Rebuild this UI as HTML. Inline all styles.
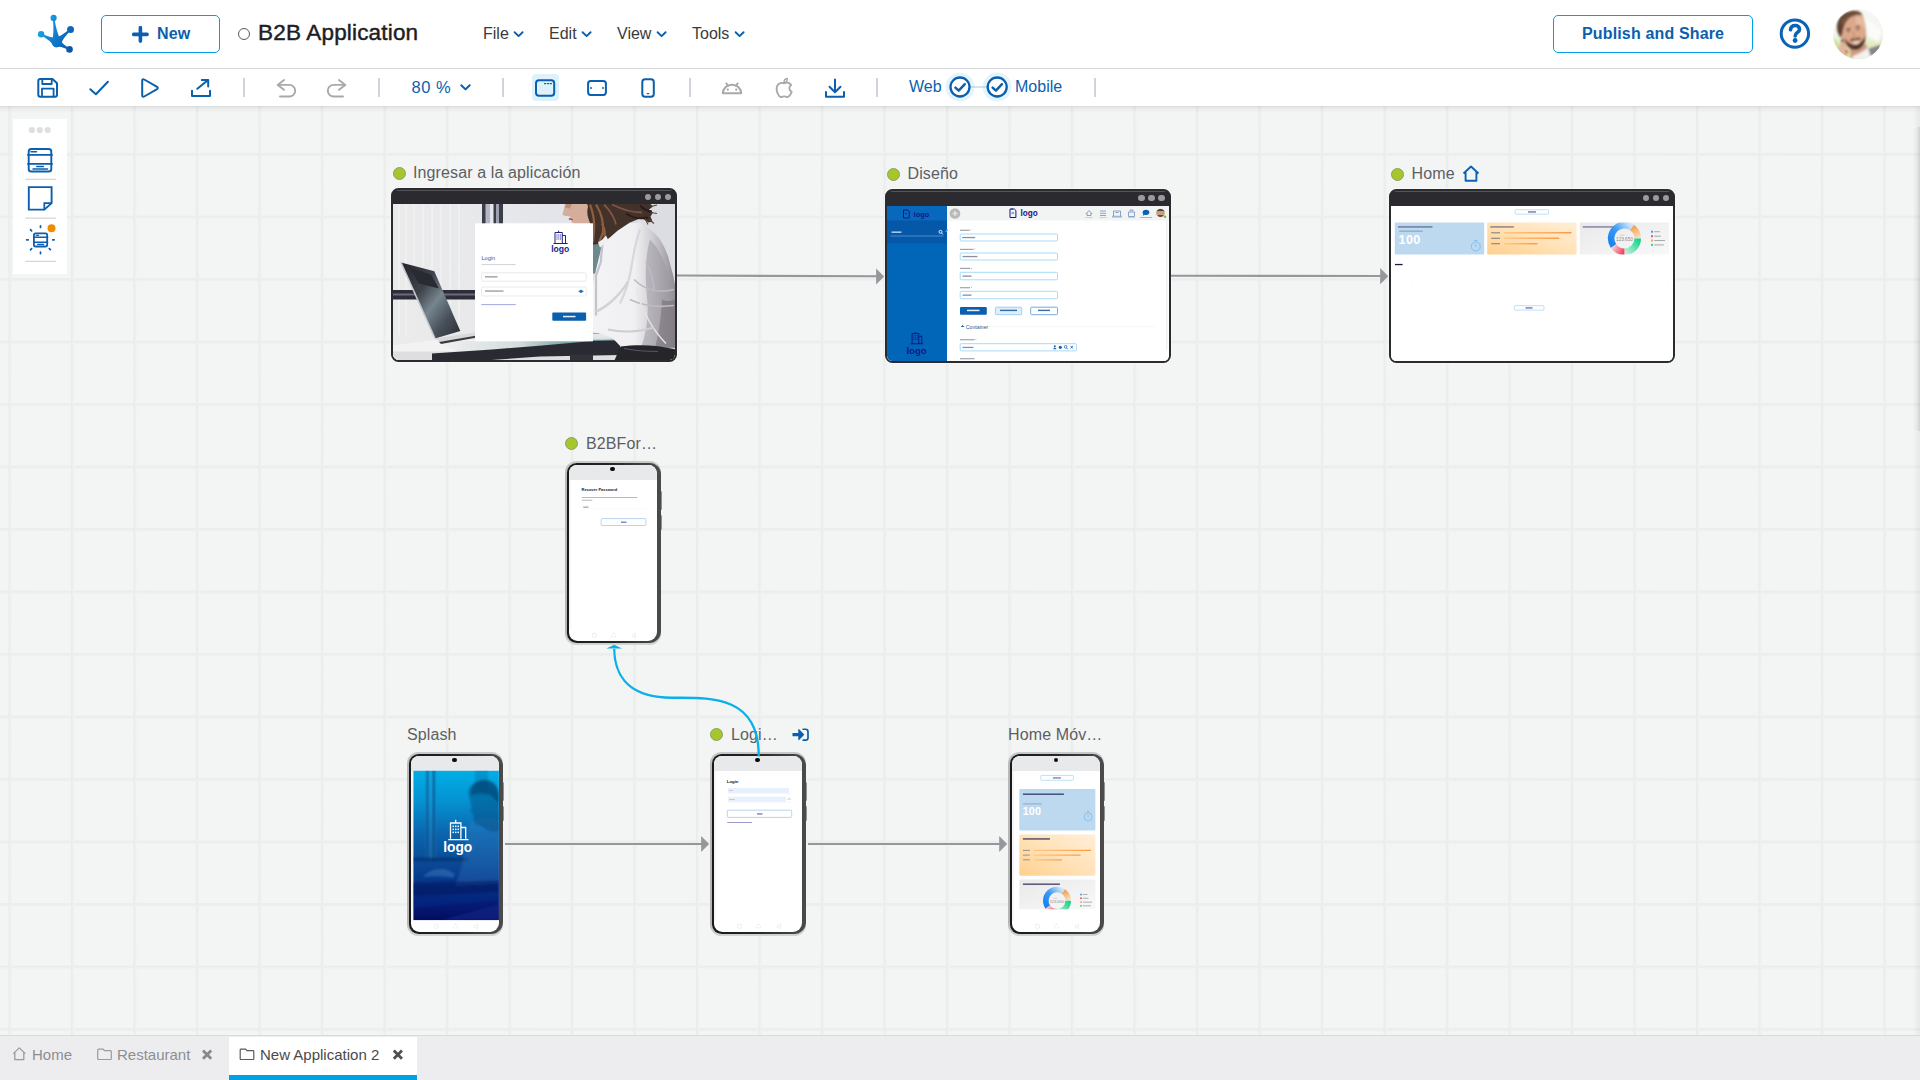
<!DOCTYPE html>
<html lang="en">
<head>
<meta charset="utf-8">
<title>B2B Application</title>
<style>
*{box-sizing:border-box;margin:0;padding:0}
html,body{width:1920px;height:1080px;overflow:hidden;background:#fff;font-family:"Liberation Sans",sans-serif;color:#333}
.abs{position:absolute}
#hdr{position:absolute;left:0;top:0;width:1920px;height:69px;background:#fff;border-bottom:1px solid #d6d8db}
#tb{position:absolute;left:0;top:69px;width:1920px;height:37px;background:#fff;z-index:5;box-shadow:0 1px 2px rgba(0,0,0,.06)}
#cv{position:absolute;left:0;top:106px;width:1920px;height:929px;background-color:#f3f5f4;overflow:hidden;
 background-image:linear-gradient(to right,#e9ebeb 0,#ebeded 1px,#eff1f0 2.600px,transparent 2.600px),linear-gradient(to bottom,#e9ebeb 0,#ebeded 1px,#eff1f0 2.600px,transparent 2.600px);
 background-size:62.5px 62.5px;background-position:8.4px 47.2px}
#cv:before{content:"";position:absolute;left:0;top:0;width:100%;height:7px;background:linear-gradient(to bottom,rgba(0,0,0,.055),rgba(0,0,0,0));z-index:1}
#cv:after{content:"";position:absolute;right:0;top:0;width:7px;height:100%;background:linear-gradient(to left,rgba(0,0,0,.05),rgba(0,0,0,0));z-index:1}
#thumb{position:absolute;left:1912.500px;top:127px;width:7.500px;height:304px;border-radius:5px 0 0 5px;background:linear-gradient(to right,rgba(0,0,0,0),rgba(0,0,0,.03) 60%,rgba(0,0,0,.10));z-index:2}
#ft{position:absolute;left:0;top:1035px;width:1920px;height:45px;background:#ededef;border-top:1px solid #d9dadc}
.btn{position:absolute;border:1px solid #00a0e4;border-radius:5px;background:#fff;color:#0a5fae;font-weight:bold;font-size:16px;text-align:center}
.menu{position:absolute;top:25px;font-size:16px;color:#3a3a3a;white-space:nowrap}
.lbl{position:absolute;font-size:16px;color:#5d5e63;white-space:nowrap;letter-spacing:.12px;margin-top:1.200px}
.dot{position:absolute;width:13.200px;height:13.200px;border-radius:50%;background:#a5c72c;border:1px solid #8f9f62}
.sep{position:absolute;top:78px;width:2px;height:19px;background:#d2d3da}
.web{position:absolute;width:286px;height:174px;border:2px solid #2b2a2f;border-radius:7.500px;background:#2b2a2f;overflow:hidden;box-shadow:0 0 0 1px rgba(255,255,255,.3)}
.web .wc{background:#fff;border-radius:0 0 5.500px 5.500px}
.web .bar{position:absolute;left:0;top:0;width:100%;height:14.400px;background:#2b2a2f}
.web .bar:before{content:"";position:absolute;left:3px;right:3px;top:0;height:1px;background:rgba(255,255,255,.2)}
.web .bar i{position:absolute;top:3.600px;width:6.600px;height:6.600px;margin-left:-.3px;border-radius:50%;background:#9b9b9f}
.ph{position:absolute;width:96px;height:183px;border-radius:14px;background:#fff;border:2.5px solid #2e2e30;box-shadow:0 0 0 1px #b9b9bb;overflow:hidden}

.pho{position:absolute;width:95.600px;height:184.100px;border-radius:11.500px;background:linear-gradient(to bottom,#c9c9ca 0,#b9b9ba 8%,#b4b4b5 92%,#d4d4d5 100%)}
.pho .bz{position:absolute;left:2px;top:2px;right:0;bottom:2.200px;border-radius:9.800px 11.500px 12px 9.800px;background:linear-gradient(to right,#1a1a1b 0,#242425 45%,#3e3e3f 80%,#4b4b4c 100%)}
.pho .sc{position:absolute;left:3.900px;top:3.900px;right:3.500px;bottom:4.200px;border-radius:8px 8.500px 9px 8.500px;background:#fff;overflow:hidden}
.pho .st{position:absolute;left:0;top:0;width:100%;height:14.800px;background:#e8e9eb}
.pho .gut{position:absolute;left:0;top:14.800px;width:2.100px;height:150px;background:#f6f6f7}
.pho .cam{position:absolute;left:45.300px;top:5.500px;width:4.800px;height:4.800px;border-radius:50%;background:#0c0c0e}
.pho .sb{position:absolute;right:-1.300px;width:2.600px;background:#8f9190;border-radius:1.200px}
.pho svg.nav{position:absolute;left:0;top:164px}
.pho svg.in{position:absolute;left:0;top:0}
</style>
</head>
<body>
<div id="hdr">
<svg class="abs" style="left:34px;top:12px" width="46" height="44" viewBox="34 12 46 44">
<defs><linearGradient id="lg1" gradientUnits="userSpaceOnUse" x1="38" y1="30" x2="74" y2="48"><stop offset="0" stop-color="#1aa6e8"/><stop offset=".5" stop-color="#0f78c8"/><stop offset="1" stop-color="#0a52a4"/></linearGradient></defs>
<g fill="url(#lg1)" stroke="none"><circle cx="53.6" cy="17.9" r="3.1"/><circle cx="70.5" cy="29.5" r="3.5"/><circle cx="41.1" cy="34.3" r="3.2"/><circle cx="69.5" cy="49.4" r="3.3"/><path d="M61.17 41.74Q56.48 31.91 54.67 19.64L52.98 19.85Q54.20 32.19 52.03 42.86Z"/><path d="M59.72 45.68Q63.22 37.77 69.53 31.55L68.38 30.30Q61.66 36.08 53.48 38.92Z"/><path d="M58.71 38.21Q50.62 37.92 43.20 34.43L42.42 35.94Q49.56 39.96 54.49 46.39Z"/><path d="M54.38 46.33Q61.46 46.29 67.36 49.19L68.18 47.70Q62.57 44.27 58.82 38.27Z"/><ellipse cx="56.400" cy="42.600" rx="4.600" ry="4.800"/></g></svg>
<div class="btn" style="left:101px;top:15px;width:119px;height:38px"></div>
<svg class="abs" style="left:132px;top:26px" width="17" height="17" viewBox="0 0 17 17"><path d="M8.4 1.7v13.4M1.7 8.4h13.4" stroke="#0a5fae" stroke-width="3.6" stroke-linecap="round"/></svg>
<div class="abs" id="tnew" style="left:157px;top:25px;font-size:16px;font-weight:bold;color:#0a5fae;letter-spacing:.2px">New</div>
<div class="abs" style="left:238px;top:27.500px;width:12px;height:12px;border:1.300px solid #5a5a5a;border-radius:50%"></div>
<div class="abs" id="ttl" style="left:258px;top:20.200px;font-size:22.500px;letter-spacing:.18px;color:#1d1d22;white-space:nowrap;-webkit-text-stroke:.45px #1d1d22">B2B Application</div>
<div class="menu" id="m1" style="left:483px">File</div>
<div class="menu" id="m2" style="left:549px">Edit</div>
<div class="menu" id="m3" style="left:617px">View</div>
<div class="menu" id="m4" style="left:692px">Tools</div>
<svg class="abs" style="left:0;top:0" width="800" height="68"><g fill="none" stroke="#0a5fae" stroke-width="1.9" stroke-linecap="round" stroke-linejoin="round">
<path d="M514.6 32.2l4 3.9 4-3.9"/><path d="M582.6 32.2l4 3.9 4-3.9"/><path d="M657.6 32.2l4 3.9 4-3.9"/><path d="M735.6 32.2l4 3.9 4-3.9"/></g></svg>
<div class="btn" style="left:1553px;top:15px;width:200px;height:38px"></div>
<div class="abs" id="tpub" style="left:1582px;top:25px;font-size:16px;font-weight:bold;color:#0a5fae;white-space:nowrap;letter-spacing:.15px">Publish and Share</div>
<svg class="abs" style="left:1776px;top:15px" width="38" height="38" viewBox="1776 15 38 38"><circle cx="1794.900" cy="33.600" r="13.700" fill="none" stroke="#0a63b4" stroke-width="3"/>
<path d="M1790.500 29.700c.3-2.700 2.100-4.200 4.700-4.200 2.500 0 4.300 1.500 4.300 3.700 0 1.800-1 2.700-2.400 3.600-1.400 .9-1.900 1.700-1.900 3.200" fill="none" stroke="#0a63b4" stroke-width="3.600" stroke-linecap="round" stroke-linejoin="round"/><circle cx="1795.100" cy="40.500" r="2.400" fill="#0a63b4"/></svg>
<svg class="abs" style="left:1833px;top:9px" width="50" height="50" viewBox="1833 9 50 50">
<defs><clipPath id="avc"><circle cx="1858.100" cy="34.100" r="25"/></clipPath><filter id="avb" x="-10%" y="-10%" width="120%" height="120%"><feGaussianBlur stdDeviation=".8"/></filter>
<linearGradient id="avbg" x1="0" y1="0" x2="0" y2="1"><stop offset="0" stop-color="#f7f8f7"/><stop offset=".5" stop-color="#f3f5ee"/><stop offset=".75" stop-color="#dfe9b8"/><stop offset="1" stop-color="#d3e09c"/></linearGradient></defs>
<g clip-path="url(#avc)"><rect x="1833" y="9" width="50" height="50" fill="url(#avbg)"/>
<g filter="url(#avb)">
<path d="M1833 38c4 2 6 6 6 12l-6 6z" fill="#cfe0a0"/>
<path d="M1866 20c6 2 12 6 16 12l-4 10-10-6z" fill="#fbfbfa"/>
<path d="M1868 49l12-4 6 14h-30z" fill="#85858f"/>
<path d="M1849 44h17l2 8-8 6h-9z" fill="#cf9c80"/><path d="M1853 56l7-3 8-5 4 12h-20z" fill="#f3f0f0"/>
<path d="M1839 30c-1-8 4-14 11-17 6-2 11-1 13 3l2.500 10c1 6 1 11-1 16-2 5-5 8-9 8.500-5 0-9-3-12-8-2-4-3.500-7-4.500-12.500z" fill="#dba88a"/>
<path d="M1856 16c4 0 7 2 8 6l1 8c-3-4-6-6-9-6z" fill="#e6bba0"/>
<path d="M1837.500 32c-2-8 1-16 9-19.500 7-3 14-2 16 2.500-6-.5-12 1-15 5-3 3-4 7-5 13l-2 5z" fill="#5f4230"/>
<path d="M1842 24c2-6 8-10 16-10" stroke="#8a6446" stroke-width="1.600" fill="none"/>
<path d="M1844.500 38c1 6 4 11 9.500 12 5 .5 9.500-3 11-9l.5-6c-1.500 4-4 7-7.500 9-2 1-4.500 1-6.500 0-3-1.500-5.500-3.500-7-6z" fill="#523729"/>
<path d="M1850 39.500c3-1.500 7-2 11-1.500l-1 2c-3-.5-6 0-9 1.500z" fill="#5b3d2c"/>
<path d="M1852.500 42c2.500 .8 5.500 .4 7.500-1-.8 2-2.200 3-4 3s-3-.8-3.500-2z" fill="#f6ece7"/>
<path d="M1846 29.500l4.500-1.200M1855.500 27.500l4.500-1.300" stroke="#4b3326" stroke-width="1.200"/>
<path d="M1847 31.500l3-.5M1856.500 29.800l3-.6" stroke="#3a2a22" stroke-width=".9"/>
<path d="M1853.500 31c.5 3 .5 5.500-.5 7.500l3.500 .3" stroke="#b98568" stroke-width=".9" fill="none"/>
<path d="M1840.500 40l2.600-1 3.400 12-2.600 1z" fill="#2f4a45"/>
<path d="M1838 52c0-6 2-10 5-11l5 10c-1 4-2 8-3 10h-8z" fill="#e3b59b"/>
<path d="M1845.500 50c1.300-.4 2.500 .4 2.500 1.700s-.8 2-2 2z" fill="#b5505a"/>
</g></g></svg>
</div>
<div id="tb"></div>
<div id="tbi" style="position:absolute;left:0;top:0;width:1920px;height:106px;z-index:6;pointer-events:none">
<div class="sep" style="left:243px"></div><div class="sep" style="left:378px"></div><div class="sep" style="left:502px"></div><div class="sep" style="left:689px"></div><div class="sep" style="left:876px"></div><div class="sep" style="left:1094px"></div>
<div class="abs" style="left:532px;top:74px;width:27px;height:27px;border-radius:4px;background:#def2fc"></div>
<svg class="abs" style="left:0;top:69px" width="1200" height="37" viewBox="0 69 1200 37" fill="none" stroke-linecap="round" stroke-linejoin="round">
<g stroke="#0a5fae" stroke-width="2">
<!-- save -->
<path d="M40.300 79h12.200l4.500 4.300v11.400a2 2 0 0 1-2 2h-14.700a2 2 0 0 1-2-2v-13.700a2 2 0 0 1 2-2z"/><path d="M42.300 79.300v4.700h9.400v-4.700" stroke-width="1.800"/><path d="M42 96.400v-7.800h11.600v7.800" stroke-width="1.800"/>
<!-- check -->
<path d="M90.300 89.200l5.600 5 12-12.400"/>
<!-- play -->
<path d="M142.200 80.600v14.800a1.300 1.300 0 0 0 2 1.100l12.900-7.400a1.300 1.300 0 0 0 0-2.200l-12.900-7.400a1.300 1.300 0 0 0-2 1.100z"/>
<!-- export -->
<path d="M192 90.800v5.200h18v-5.200"/><path d="M197.300 88.800l10.800-8.800M201.800 80h6.400v6.400"/>
<!-- browser -->
<rect x="536" y="80.300" width="18.200" height="15.400" rx="3"/><path d="M544.500 83.600h1.200M547.500 83.600h1.200M550.300 83.600h1.200" stroke-width="1.300"/>
<!-- tablet -->
<rect x="588.100" y="80.900" width="17.800" height="14" rx="2.600"/><path d="M591 87.400v1.200M603 87.400v1.200" stroke-width="1.500"/>
<!-- phone -->
<rect x="642.300" y="79.300" width="11.500" height="17.500" rx="2.800"/><path d="M647.300 93.600h1.400" stroke-width="1.400"/>
<!-- download -->
<path d="M826 92v4.800h18V92"/><path d="M835 79.500v12.500M829.500 86.800l5.500 5.400 5.500-5.400"/>
<!-- chevron zoom -->
<path d="M461.300 85.200l4.200 4.200 4.200-4.200"/>
</g>
<g stroke="#a9a9a9" stroke-width="1.900">
<path d="M284 80l-6.300 4.900 6.300 4.900"/><path d="M278.200 84.900h11.200a5.800 5.800 0 0 1 0 11.600h-9.400"/>
<path d="M339 80l6.300 4.900-6.300 4.900"/><path d="M344.800 84.900h-11.200a5.800 5.800 0 0 0 0 11.600h9.400"/>
<!-- android -->
<path d="M722.800 93.300h18.400c0-4.600-4-8.500-9.200-8.500s-9.200 3.900-9.200 8.500z" stroke-width="2"/><path d="M726.300 83.300l1.700 2.700M737.700 83.300l-1.700 2.700" stroke-width="1.900"/><path d="M727.700 89.600h.1M736.200 89.600h.1" stroke-width="2.300"/>
<!-- apple -->
<path d="M784.300 83.300c1.600-1 2.600-.9 3.700-.6 1.300 .3 2.400 1.100 3.200 2.300-2.600 1.700-2.500 5.300 .5 6.700-.7 2-1.700 3.700-2.800 4.700-1 .9-2.100 .9-3.200 .3-1.100-.5-2-.5-3.100 0-1.100 .6-2.100 .6-3.100-.4-2.400-2.500-3.900-7.300-2.300-10.500 1.300-2.600 4.300-3.600 7.100-2.500z" stroke-width="1.900"/><path d="M784 82.700c-.2-2.100 1.300-3.900 3.300-4.200 .3 2.100-1.200 4-3.300 4.200z" stroke-width="1.300"/>
</g>
<!-- web/mobile -->
<circle cx="960" cy="87" r="14.500" fill="#e4f4fc" stroke="none"/><circle cx="997.200" cy="87" r="14.500" fill="#e4f4fc" stroke="none"/>
<path d="M970 87h17" stroke="#9ccbe8" stroke-width="1"/>
<g stroke="#0a5fae" stroke-width="2.300"><circle cx="960" cy="87" r="9.500" fill="#fff"/><circle cx="997.200" cy="87" r="9.500" fill="#fff"/>
<path d="M955.400 87.600l3.300 3 6.100-6.400M992.600 87.600l3.300 3 6.100-6.400" stroke-width="2.400"/></g>
</svg>
<div class="abs" id="tz" style="left:411.500px;top:77.500px;font-size:16.500px;letter-spacing:.55px;color:#0a5fae;white-space:nowrap">80 %</div>
<div class="abs" id="tw" style="left:909px;top:78px;font-size:16px;color:#0a5fae;white-space:nowrap">Web</div>
<div class="abs" id="tm" style="left:1015px;top:78px;font-size:16px;color:#0a5fae;white-space:nowrap">Mobile</div>
</div>
<div id="cv"><div id="cvi" style="position:absolute;left:0;top:-106px;width:1920px;height:1080px">
<div id="thumb"></div>
<div class="abs" style="left:12.700px;top:118.600px;width:54.800px;height:155.400px;background:#fff"></div>
<svg class="abs" style="left:12px;top:118px" width="56" height="157" viewBox="12 118 56 157" fill="none">
<g fill="#dfdfdf"><circle cx="31.900" cy="130" r="3.100"/><circle cx="39.800" cy="130" r="3.100"/><circle cx="47.700" cy="130" r="3.100"/></g>
<g stroke="#d6d6d6" stroke-width="1.200"><path d="M25.300 179.400h30.500M25.300 218.200h30.500M25.300 261.400h30.500"/></g>
<g stroke="#0a5fae" stroke-width="1.900" stroke-linecap="round" stroke-linejoin="round">
<rect x="28.700" y="149" width="22.600" height="22.500" rx="2.600"/><path d="M28 154.900h24M28 163.900h24"/><path d="M31 151.700h5.500M36.800 166.500h6.600M33 169h14.500" stroke-width="1.500"/>
<path d="M28.800 187.100h22.800v16l-7.300 6.500h-15.500z" stroke-linejoin="miter"/><path d="M44.300 209.400v-6.200h7" stroke-linejoin="miter" stroke-width="1.700"/>
<rect x="33.900" y="233.300" width="13.300" height="13.200" rx="1.800" stroke-width="1.800"/><path d="M33.600 237.300h14M33.600 242.300h14" stroke-width="1.500"/><path d="M36.200 235.300h2.400M37.600 244.400h6" stroke-width="1.200"/>
<path d="M40.500 225.800v1.600M40.500 252v1.600M26.700 239.800h1.500M52.700 239.800h1.500M30.500 229.700l1.100 1.100M49.300 248.600l1.100 1.100M30.500 249.800l1.100-1.100" stroke-width="1.700"/>
</g>
<circle cx="51.500" cy="228.200" r="4" fill="#ee8b00"/>
</svg>
<svg class="abs" style="left:0;top:106px;z-index:3" width="1920" height="929" viewBox="0 106 1920 929" fill="none">
<g stroke="#97969b" stroke-width="2.100"><path d="M677 275.500L877 276.300"/><path d="M1171 275.700L1381 276"/><path d="M505 844H702"/><path d="M808 844H1000"/></g>
<g fill="#97969b"><path d="M876.100 268.400l8 8-8 8z"/><path d="M1380.200 268.100l8.100 8.100-8.100 8.100z"/><path d="M701.100 836.100l8 8-8 8z"/><path d="M999.200 836.100l8 8-8 8z"/></g>
<path d="M758.700 756.500L758.700 752.500C757 690 700 699 665 697.500C625 695 614.500 672 614.200 649" stroke="#0ab0ea" stroke-width="2.300"/>
<path d="M606.300 648.600l7.900-3.800 7.900 3.800z" fill="#0ab0ea"/>
</svg>
<div class="dot" style="left:392.500px;top:166.500px"></div><div class="lbl" style="left:413px;top:163px">Ingresar a la aplicación</div>
<div class="dot" style="left:886.500px;top:167.700px"></div><div class="lbl" style="left:907.500px;top:164px">Diseño</div>
<div class="dot" style="left:1390.500px;top:167.700px"></div><div class="lbl" style="left:1411.500px;top:164px">Home</div>
<svg class="abs" style="left:1462px;top:165.300px" width="18" height="17.600" viewBox="0 0 18 17" preserveAspectRatio="none" fill="none" stroke="#0a62b4" stroke-width="1.900" stroke-linejoin="round"><path d="M1.500 8.300L9 1.500l7.500 6.800M3.600 6.700v8.600h10.800V6.700"/></svg>
<div class="dot" style="left:564.800px;top:437.300px"></div><div class="lbl" style="left:586px;top:434px">B2BFor…</div>
<div class="lbl" style="left:407px;top:725px">Splash</div>
<div class="dot" style="left:709.500px;top:728.200px"></div><div class="lbl" style="left:731px;top:725px">Logi…</div>
<svg class="abs" style="left:791.500px;top:728.300px" width="17" height="13.400" viewBox="0 0 19 15" fill="#0a5fae"><path d="M1 5.600h6V1.800c0-.5.600-.8 1-.4l5.400 5.500c.3.300.3.700 0 1L8 13.400c-.4.400-1 .1-1-.4V9.300H1c-.3 0-.5-.2-.5-.5V6.100c0-.3.200-.5.500-.5z"/><path d="M12.500 1.400h2.700c1.500 0 2.700 1.200 2.700 2.700v6.800c0 1.500-1.200 2.700-2.700 2.700h-2.700" fill="none" stroke="#0a5fae" stroke-width="1.900" stroke-linecap="round"/></svg>
<div class="lbl" style="left:1008px;top:725px">Home Móv…</div>
<div class="web" style="left:391px;top:188.100px"><div class="bar"><i style="left:252px"></i><i style="left:262px"></i><i style="left:272px"></i></div><div class="wc" style="position:absolute;left:0;top:14.400px;width:282px;height:156px;overflow:hidden"><svg class="abs" style="left:0;top:0" width="282" height="156" viewBox="393 204.500 282 156">
<defs>
<linearGradient id="bgp" x1="0" x2="1" y1="0" y2="0"><stop offset="0" stop-color="#ebebec"/><stop offset=".45" stop-color="#e6e7ea"/><stop offset=".75" stop-color="#dfe1e6"/><stop offset="1" stop-color="#d5d7dd"/></linearGradient>
<linearGradient id="lap" x1="0" x2="1" y1="0" y2="1"><stop offset="0" stop-color="#23232b"/><stop offset=".35" stop-color="#3f434c"/><stop offset=".55" stop-color="#76858e"/><stop offset=".75" stop-color="#4a525c"/><stop offset="1" stop-color="#2a2b33"/></linearGradient>
<linearGradient id="blo" x1="0" x2="1" y1="0" y2="1"><stop offset="0" stop-color="#f4f4f5"/><stop offset=".5" stop-color="#e4e3e6"/><stop offset="1" stop-color="#bdbbc2"/></linearGradient>
<linearGradient id="tbl" x1="0" x2="1" y1="0" y2="0"><stop offset="0" stop-color="#f1f1f2"/><stop offset=".45" stop-color="#d4dcdc"/><stop offset=".7" stop-color="#7fa7a6"/><stop offset="1" stop-color="#5d8a8a"/></linearGradient>
<filter id="bl" x="-5%" y="-5%" width="110%" height="110%"><feGaussianBlur stdDeviation=".7"/></filter>
<filter id="bl2" x="-5%" y="-5%" width="110%" height="110%"><feGaussianBlur stdDeviation="1.400"/></filter>
</defs>
<rect x="393" y="204.500" width="282" height="156" fill="url(#bgp)"/>
<g filter="url(#bl)">
<g stroke="#f4f4f5" stroke-width="1.600" opacity=".8"><path d="M399 205v130M406 205v130M414 205v60M423 205v62M432 205v66M441 205v80M450 205v100M459 205v120"/></g>
<rect x="598" y="204" width="80" height="100" fill="#dcdde3"/>
<rect x="540" y="204" width="60" height="60" fill="#e3e5ea"/>
<!-- pillars -->
<rect x="482" y="204" width="21" height="22" fill="#3d3e47"/><rect x="485.500" y="204" width="4.500" height="22" fill="#b4b8c6"/><rect x="490" y="204" width="3.500" height="22" fill="#e5e6ea"/><rect x="496" y="204" width="3" height="22" fill="#9da1b0"/>
<!-- rail -->
<rect x="392" y="290.500" width="86" height="9.500" fill="#2e2e38"/><rect x="392" y="294" width="86" height="2" fill="#6b6b80"/>
<!-- table -->
<path d="M392 346l46-6 170 0 0 10-216 8z" fill="#f2f2f3"/>
<path d="M392 352h230v10h-230z" fill="#dedee1"/>
<path d="M436 341.500l184-1.500v8l-160 5z" fill="url(#tbl)"/>
<path d="M432 354l60-4 50-4 51-4.500 27-.500v14.500l-80 1.500-70 5h-38z" fill="#2a2a32"/>
<path d="M570 355h23v7h-23z" fill="#33333b"/>
<!-- laptop -->
<path d="M401 263l33.300 8.800 26 59.600-25.300 7.600z" fill="url(#lap)"/>
<path d="M401 263l34 76" stroke="#c9c9cd" stroke-width="1.600"/>
<path d="M409 268l22 7 8 14-20-5z" fill="#2a2a33"/>
<path d="M435 339l40-6 3 3-38 7z" fill="#d8d8da"/><path d="M439 342.500l38-6.500v2l-36 6.500z" fill="#3a3a40"/>
<!-- woman -->
<rect x="592" y="244" width="10" height="30" fill="#6c8a8e"/>
<rect x="592" y="322" width="22" height="16" fill="#e4e6e8"/><path d="M592 325h20M592 328h20M592 331h20M592 334h20" stroke="#a9adb2" stroke-width="1"/>
<defs><linearGradient id="blg" x1="0" x2="1" y1="0" y2="0"><stop offset="0" stop-color="#f3f3f5"/><stop offset=".5" stop-color="#f0f0f2"/><stop offset=".72" stop-color="#cfcdd3"/><stop offset="1" stop-color="#8f8a93"/></linearGradient></defs>
<path d="M604 236l10-6 14-6 12.400-1c7 4 13 9 18.400 15.200 4 6 7 12 9.200 18.300l5.300 20 2.700 14v58l-55.400-1.500-8.600-9-19-6v-47l3-15 5-20z" fill="url(#blg)"/>
<path d="M650 240c8 8 14 20 18 34l7 30v44h-34c6-16 8-34 6-50-2-20-2-40 3-58z" fill="#9d98a1" opacity=".55"/>
<path d="M662 300c4 2 8 2 13 0v48h-20c4-14 6-30 7-48z" fill="#6d666e" opacity=".5"/>
<path d="M604 238c-2 8-3 16-3 24l-5 14 0 40" stroke="#c5c3ca" stroke-width="2.200" fill="none"/>
<path d="M640 230c-4 10-6 22-8 34-2 14-6 28-12 40" stroke="#d9d7dd" stroke-width="2.200" fill="none"/>
<path d="M646 262c6 12 8 22 8 30M634 280c10 10 24 14 40 10M630 300c12 6 28 8 44 6" stroke="#bdbac2" stroke-width="1.600" fill="none"/>
<path d="M596 312c10-4 24-16 32-30" stroke="#d3d1d7" stroke-width="2.500" fill="none"/>
<path d="M636 290c6 20 16 40 30 54" stroke="#e6e5ea" stroke-width="1.300" fill="none"/>
<path d="M608 330c12 3 30 3 46-2" stroke="#cfcdd4" stroke-width="2" fill="none"/>
<path d="M620.500 347c18-2.500 38-1.500 55.500 3v12h-62z" fill="#26262c"/>
<path d="M624 349c10 2 22 3 34 3" stroke="#55556a" stroke-width="1.200" fill="none"/>
<!-- face -->
<path d="M565.200 204l-1 4-.700 3.500-1 3c0 1.400 1.500 1.600 3.500 2l3.800 .400c.600 1 .600 2 .400 3l1.800 .400c-.400 1-.600 1.800 0 2.600 2 1.600 6 1.800 10 1.800h14v-21z" fill="#d4ae9b"/>
<path d="M568.800 219.300l4 1" stroke="#9a5558" stroke-width="1.500"/>
<path d="M566 204l-1 4 5 1 2-5z" fill="#b98f7c"/>
<path d="M590 222h12v22h-9v-6z" fill="#c9a590"/>
<!-- hair -->
<path d="M587 204h63l3 3-4 3 4 3-2.500 4 2 5-4 1-7-4.700-12 5-12 8-8 7-7 5.500-9 1.500-2-3c1-6 1-12-1-18-3-6-4-12-2.500-17z" fill="#43302a"/>
<path d="M590 205c3 8 5 16 4 26l-1 12M596 205c5 8 8 18 7 28l-4 10M602 224c3 6 4 10 2 16" stroke="#8d5f3e" stroke-width="2.200" fill="none"/>
<path d="M604 205c6 6 10 12 12 20M612 205c8 4 18 8 30 8" stroke="#7b5744" stroke-width="1.800" fill="none"/>
<path d="M640 206c4 4 8 6 12 6M626 214c6 4 14 6 22 4" stroke="#2c1f1b" stroke-width="2" fill="none"/>
<path d="M651 207l6-1.500M651 213l6 1M649 220l5 4M645 219l3 6" stroke="#5a4338" stroke-width="1.100" fill="none"/>
<path d="M598 243c3-2 6-4 8-7l2 4c-2 3-5 6-8 8z" fill="#f0f0f2"/>
</g>
<!-- card -->
<rect x="475" y="223.800" width="118" height="118" fill="#fff"/>
<g fill="none" stroke="#20208a" stroke-width="1"><path d="M555 243.500v-10.500h7.300v10.500M562.300 236h3.200v7.500M558.600 233v-1.800M553.500 244h14.200"/></g>
<g fill="#20208a"><rect x="556.500" y="235" width="1" height="1"/><rect x="558.300" y="235" width="1" height="1"/><rect x="560.100" y="235" width="1" height="1"/><rect x="556.500" y="237" width="1" height="1"/><rect x="558.300" y="237" width="1" height="1"/><rect x="560.100" y="237" width="1" height="1"/><rect x="556.500" y="239" width="1" height="1"/><rect x="558.300" y="239" width="1" height="1"/><rect x="560.100" y="239" width="1" height="1"/></g>
<text x="560.300" y="252.200" text-anchor="middle" font-family="Liberation Sans" font-weight="bold" font-size="8.600" fill="#20208a">logo</text>
<text x="481.500" y="260.600" font-family="Liberation Sans" font-size="5.600" fill="#4250b5">Login</text>
<rect x="481.600" y="264.500" width="34" height="1.100" fill="#b9b9c2" opacity=".6"/>
<rect x="481.500" y="273.300" width="104.800" height="8.400" rx="1.500" fill="#fff" stroke="#e1e1e4" stroke-width=".7"/>
<rect x="481.500" y="287.500" width="104.800" height="9" rx="1.500" fill="#fff" stroke="#e1e1e4" stroke-width=".7"/>
<rect x="485" y="276.600" width="12.500" height="1.500" fill="#a5a5ad"/><rect x="485" y="290.800" width="18.500" height="1.500" fill="#a5a5ad"/>
<circle cx="581" cy="291.800" r="1.600" fill="#1f6fc0"/><path d="M578.500 291.800h5" stroke="#1f6fc0" stroke-width="1"/>
<rect x="481.300" y="304.500" width="34.500" height="1.100" fill="#6f7fd0" opacity=".6"/>
<rect x="552.300" y="313" width="33.800" height="8.200" rx="1" fill="#0a5fae"/><rect x="563" y="316.300" width="12.500" height="1.500" fill="#fff" opacity=".9"/>
</svg></div></div><div class="web" style="left:884.700px;top:189.200px"><div class="bar"><i style="left:252px"></i><i style="left:262px"></i><i style="left:272px"></i></div><div class="wc" style="position:absolute;left:0;top:14.400px;width:282px;height:156px;overflow:hidden"><svg class="abs" style="left:0;top:0" width="282" height="156" viewBox="887 205.500 282 156" font-family="Liberation Sans">
<rect x="887" y="205" width="282" height="157" fill="#fff"/>
<rect x="947" y="205" width="222" height="15" fill="#f2f4f4"/>
<rect x="887" y="205" width="60" height="157" fill="#0266b8"/>
<rect x="887" y="205" width="60" height="15" fill="#0869bc"/>
<rect x="887" y="220" width="60" height="23" fill="#0557a8"/>
<path d="M903.500 209.500h4.200l1.600 1.500v6.500h-5.800z" fill="none" stroke="#15158a" stroke-width="1"/><path d="M905 213h2" stroke="#15158a" stroke-width=".8"/>
<text x="913.600" y="216.300" font-weight="bold" font-size="7.400" fill="#15158a">logo</text>
<rect x="891.500" y="231" width="10" height="1.300" fill="#e8f0fa" opacity=".9"/><path d="M890.500 235.500h53" stroke="#7fb0e0" stroke-width=".6"/>
<circle cx="940.500" cy="231.300" r="1.500" fill="none" stroke="#fff" stroke-width=".9"/><path d="M941.600 232.500l1.300 1.400" stroke="#fff" stroke-width=".9"/>
<path d="M945.500 231.500l2-2.500" stroke="#18a5e6" stroke-width="1.300"/>
<g transform="translate(910.7 331.2) scale(0.92)" fill="none" stroke="#15158a" stroke-width="1.1"><path d="M1.500 12.500V2h7.300v10.500M8.800 5h3.200v7.500M5.100 2V.2M0 13h13.700"/><path d="M3 4.500h1M4.800 4.500h1M6.600 4.500h1M3 6.500h1M4.800 6.500h1M6.600 6.500h1M3 8.500h1M4.800 8.500h1M6.600 8.500h1" stroke-width="1.1"/></g>
<text x="916.500" y="353.200" text-anchor="middle" font-weight="bold" font-size="9.600" fill="#15158a">logo</text>
<circle cx="955" cy="213" r="5.300" fill="#b9b9ba"/><path d="M952.600 213h4.800M955 210.600v4.800" stroke="#e4e4e4" stroke-width="1.500"/>
<path d="M1010 208.500h4.300l1.600 1.500v7h-5.900z" fill="none" stroke="#15158a" stroke-width="1"/><path d="M1011.500 212.500h2.500M1012 207.500v2" stroke="#15158a" stroke-width=".8"/>
<text x="1020.500" y="215.500" font-weight="bold" font-size="8.200" fill="#15158a">logo</text>
<g fill="none" stroke="#6f8fc0" stroke-width=".8"><path d="M1085.800 213.500l3.200-3.500 3.200 3.500M1087 212.500v2.500h4v-2.500"/><path d="M1100 210.500h6M1100 212.800h6M1100 215h6"/><path d="M1113.500 215.500v-5h7v5M1112 215.800h10M1115.500 212h3"/><path d="M1128.500 211.500h6v4.500h-6zM1130 211v-1.500h3V211"/></g>
<g fill="#c5cbd8"><rect x="1085.500" y="216.600" width="7" height=".9"/><rect x="1099.500" y="216.600" width="7" height=".9"/><rect x="1112" y="216.600" width="10" height=".9"/><rect x="1128" y="216.600" width="7" height=".9"/><rect x="1140" y="216.600" width="12" height=".9" fill="#8fb0dc"/></g>
<ellipse cx="1146" cy="211.800" rx="3.300" ry="2.600" fill="#0a5fae"/><path d="M1143.500 213l-.8 2.300 2.600-1.200z" fill="#0a5fae"/>
<circle cx="1160.500" cy="212.500" r="4.300" fill="#c79f84"/><path d="M1156.500 211c1-3.500 7-3.500 8 0l-1.500-.5h-5z" fill="#5b3f2e"/><path d="M1157.500 214.500c1 2.500 5 2.500 6 0z" fill="#6a4a38"/><circle cx="1165" cy="216.300" r="1.300" fill="#7bc043"/>
<g fill="#9fa3ad"><rect x="960" y="229.200" width="9.500" height="1.200"/><rect x="960" y="248.300" width="13.500" height="1.200"/><rect x="960" y="267.300" width="10" height="1.200"/><rect x="960" y="286.600" width="10" height="1.200"/><rect x="960" y="338.600" width="14.500" height="1.200"/><rect x="960" y="357.600" width="14.500" height="1.200"/></g>
<g fill="#e06a6a"><rect x="970.500" y="229" width=".8" height=".8"/><rect x="974.500" y="248.100" width=".8" height=".8"/><rect x="971" y="267.800" width=".8" height=".8"/><rect x="971" y="286.400" width=".8" height=".8"/><rect x="975.500" y="338.400" width=".8" height=".8"/></g>
<g fill="#fff" stroke="#9ed7f7" stroke-width=".9"><rect x="960.200" y="233.500" width="97.300" height="7" rx="1"/><rect x="960.200" y="252.500" width="97.300" height="7" rx="1"/><rect x="960.200" y="271.800" width="97.300" height="7.500" rx="1"/><rect x="960.200" y="290.800" width="97.300" height="7.500" rx="1"/><rect x="960.200" y="343.200" width="116.300" height="7.200" rx="1"/></g>
<g fill="#8d9099"><rect x="962.200" y="236.400" width="13" height="1.300"/><rect x="962.500" y="255.400" width="15" height="1.300"/><rect x="962.500" y="275" width="9" height="1.300"/><rect x="962.500" y="294" width="9" height="1.300"/><rect x="962.500" y="346.300" width="11" height="1.300"/></g>
<rect x="960" y="306.500" width="26.800" height="7.800" rx="1" fill="#0a5fae"/><rect x="967" y="309.200" width="12.500" height="1.500" fill="#e6effa"/>
<rect x="995.400" y="306.700" width="26.300" height="7.500" rx="1" fill="#dceffb" stroke="#8cc6ec" stroke-width=".8"/><rect x="1000" y="309.200" width="17" height="1.400" fill="#3b6aa6"/>
<rect x="1030.700" y="306.700" width="26.800" height="7.500" rx="1" fill="#fff" stroke="#4f94d4" stroke-width=".8"/><rect x="1038" y="309.200" width="12" height="1.400" fill="#3b6aa6"/>
<path d="M960.800 326.500l1.800-2 1.800 2z" fill="#0a5fae"/><text x="965.800" y="328.200" font-size="5.200" fill="#2b5a9c">Container</text>
<path d="M988 326.200h167" stroke="#eceef0" stroke-width=".6"/>
<g fill="#1a62ae"><circle cx="1054.800" cy="345.800" r="1"/><path d="M1053.300 348.700c0-2 3-2 3 0z"/><circle cx="1060.300" cy="346.800" r="1.600"/><circle cx="1065.600" cy="346.300" r="1.300" fill="none" stroke="#1a62ae" stroke-width=".8"/><path d="M1066.600 347.400l1.300 1.400" stroke="#1a62ae" stroke-width=".8"/><path d="M1070.500 345.400l2.400 2.600M1072.900 345.400l-2.400 2.600" stroke="#1a62ae" stroke-width=".9"/></g>
<rect x="1166.300" y="220" width="1" height="129" fill="#e6e8ea"/>
</svg></div></div><div class="web" style="left:1388.900px;top:189.200px"><div class="bar"><i style="left:252px"></i><i style="left:262px"></i><i style="left:272px"></i></div><div class="wc" style="position:absolute;left:0;top:14.400px;width:282px;height:156px;overflow:hidden"><svg class="abs" style="left:0;top:0" width="282" height="156" viewBox="1391 205.500 282 156" font-family="Liberation Sans">
<defs><linearGradient id="og" x1="0" y1="1" x2="1" y2="0"><stop offset="0" stop-color="#ffd08e"/><stop offset=".5" stop-color="#ffe2b8"/><stop offset="1" stop-color="#ffefd8"/></linearGradient>
<linearGradient id="gg" x1="0" y1="0" x2="1" y2="1"><stop offset="0" stop-color="#e9e9eb"/><stop offset=".5" stop-color="#f1f1f2"/><stop offset="1" stop-color="#f8f8f9"/></linearGradient>
<linearGradient id="ob" x1="0" y1="0" x2="1" y2="0"><stop offset="0" stop-color="#ffc987"/><stop offset="1" stop-color="#ff9a40"/></linearGradient></defs>
<rect x="1391" y="205" width="282" height="157" fill="#fff"/>
<rect x="1515.200" y="209.200" width="33.400" height="4.400" rx=".8" fill="#fff" stroke="#9ed7f7" stroke-width=".7"/><rect x="1528" y="211" width="8" height=".9" fill="#2b2b7a"/>
<rect x="1394.800" y="221.900" width="89.400" height="32" rx="1" fill="#bcd9f0"/>
<rect x="1398" y="226" width="34.500" height=".9" fill="#26265c" opacity=".85"/>
<rect x="1399.200" y="230" width="23.500" height="1.300" fill="#8fa9c4"/>
<text x="1398.600" y="243.700" font-weight="bold" font-size="12.600" fill="#fff" letter-spacing=".35">100</text>
<g fill="none" stroke="#79bbf0" stroke-width=".9"><circle cx="1475.800" cy="246" r="4.500"/><path d="M1474.300 240h3M1475.800 243.800v2.600"/></g>
<rect x="1487.200" y="221.900" width="89.400" height="32" rx="1" fill="url(#og)"/>
<rect x="1490.300" y="226" width="23.500" height=".9" fill="#26265c" opacity=".85"/>
<g fill="#9a8f86"><rect x="1491.200" y="231.600" width="8.800" height="1.300"/><rect x="1491.200" y="237.200" width="8.800" height="1.300"/><rect x="1491.200" y="242.500" width="8.800" height="1.300"/></g>
<g fill="url(#ob)"><rect x="1503.700" y="231.500" width="68" height="1.500" rx=".7"/><rect x="1503.700" y="237.100" width="55.700" height="1.500" rx=".7"/><rect x="1503.700" y="242.400" width="34" height="1.500" rx=".7"/></g>
<rect x="1579.800" y="221.900" width="89.200" height="32" rx="1" fill="url(#gg)"/>
<rect x="1582.700" y="226" width="31.300" height=".9" fill="#26265c" opacity=".85"/>
<svg x="1579.800" y="221.900" width="89.200" height="32" viewBox="1579.800 221.900 89.200 32" overflow="hidden"><defs><linearGradient id="d1b" gradientUnits="userSpaceOnUse" x1="1611.9" y1="242.4" x2="1632.0" y2="227.0"><stop offset="0" stop-color="#1c86f0"/><stop offset=".45" stop-color="#3f9bf2"/><stop offset="1" stop-color="#cfe4f8"/></linearGradient><linearGradient id="d1o" gradientUnits="userSpaceOnUse" x1="1632.0" y1="227.0" x2="1637.6" y2="239.1"><stop offset="0" stop-color="#f5a04c"/><stop offset="1" stop-color="#fbe6d4"/></linearGradient><linearGradient id="d1g" gradientUnits="userSpaceOnUse" x1="1637.7" y1="237.9" x2="1623.2" y2="251.1"><stop offset="0" stop-color="#16d487"/><stop offset="1" stop-color="#c9f0e1"/></linearGradient><linearGradient id="d1r" gradientUnits="userSpaceOnUse" x1="1624.4" y1="251.2" x2="1612.9" y2="244.6"><stop offset="0" stop-color="#f03c5a"/><stop offset="1" stop-color="#f9d6db"/></linearGradient></defs><g fill="none" stroke-width="6.6"><path d="M1613.51 245.53A13.3 13.3 0 0 1 1632.03 227.01" stroke="url(#d1b)"/><path d="M1632.03 227.01A13.3 13.3 0 0 1 1637.70 237.90" stroke="url(#d1o)"/><path d="M1637.70 237.90A13.3 13.3 0 0 1 1624.40 251.20" stroke="url(#d1g)"/><path d="M1624.40 251.20A13.3 13.3 0 0 1 1613.51 245.53" stroke="url(#d1r)"/></g></svg>
<rect x="1619.800" y="234.300" width="4.800" height=".8" fill="#c9c9cc"/>
<text x="1624.400" y="240.400" text-anchor="middle" font-size="4.700" fill="#8a8a8e">123.650</text>
<rect x="1651" y="230.200" width="2" height="2" fill="#3f9bf2"/><rect x="1651" y="234.700" width="2" height="2" fill="#f0506a"/><rect x="1651" y="239" width="2" height="2" fill="#f5a85c"/><rect x="1651" y="243.400" width="2" height="2" fill="#2bd893"/>
<g fill="#a6a8ad"><rect x="1654.200" y="230.700" width="5.600" height="1"/><rect x="1654.200" y="235.200" width="6.600" height="1"/><rect x="1654.200" y="239.500" width="10.800" height="1"/><rect x="1654.200" y="243.900" width="9.600" height="1"/></g>
<rect x="1395" y="263.400" width="7.600" height="1.300" fill="#1a1a3a"/>
<rect x="1411" y="281.700" width=".6" height=".8" fill="#ddd"/><rect x="1668" y="281.700" width=".6" height=".8" fill="#ddd"/>
<rect x="1514.300" y="305.200" width="29.700" height="4.400" rx=".8" fill="#fff" stroke="#9ed7f7" stroke-width=".7"/><rect x="1525.500" y="307" width="7" height=".9" fill="#2b2b7a"/>
</svg></div></div><div class="pho" style="left:565px;top:461.200px"><div class="sb" style="top:29.500px;height:19px"></div><div class="sb" style="top:54.300px;height:14.500px"></div><div class="bz"></div><div class="sc"><div class="st"></div><div class="gut"></div><svg class="in" width="87.900" height="176.100" viewBox="0 0 87.900 176.100" font-family="Liberation Sans">
<text x="12.600" y="26" font-weight="bold" font-size="4" fill="#16162a" textLength="35.600" lengthAdjust="spacingAndGlyphs">Recover Password</text>
<rect x="12.800" y="32.200" width="55.500" height=".7" fill="#9a9ca6"/><rect x="12.800" y="34.800" width="10.500" height=".7" fill="#9a9ca6"/>
<rect x="14.200" y="41.700" width="5.200" height=".8" fill="#6d6f7a"/><rect x="12.800" y="43.800" width="64" height=".3" fill="#e6e8ec"/>
<rect x="32.200" y="53.600" width="44.700" height="6.900" rx=".8" fill="#fff" stroke="#a6cbe9" stroke-width=".8"/><rect x="52" y="56.700" width="5.500" height=".9" fill="#3a3aa0"/>
</svg>
<svg class="nav" width="88" height="12" viewBox="0 0 88 12" fill="none" stroke="#e9e9ea" stroke-width=".8"><rect x="23.600" y="4.300" width="3.600" height="4" rx=".8"/><rect x="42.600" y="4.500" width="3.800" height="3.800" rx="1.200" stroke-dasharray="2.500 1.200"/><path d="M66.400 4.100v4.600l-3.800-2.300z"/></svg></div><div class="cam"></div></div><div class="pho" style="left:407px;top:752.100px"><div class="sb" style="top:29.500px;height:19px"></div><div class="sb" style="top:54.300px;height:14.500px"></div><div class="bz"></div><div class="sc"><div class="st"></div><div class="gut"></div><svg class="in" width="87.900" height="176.100" viewBox="0 0 87.900 176.100" font-family="Liberation Sans">
<defs><linearGradient id="spg" x1="0" y1="0" x2="0" y2="1"><stop offset="0" stop-color="#00aee6"/><stop offset=".2" stop-color="#0593d2"/><stop offset=".42" stop-color="#0b65ae"/><stop offset=".6" stop-color="#0a4c98"/><stop offset=".75" stop-color="#073588"/><stop offset=".9" stop-color="#051a74"/><stop offset="1" stop-color="#030c5e"/></linearGradient>
<filter id="sbl" x="-10%" y="-10%" width="120%" height="120%"><feGaussianBlur stdDeviation=".9"/></filter>
<clipPath id="spc"><rect x="2.400" y="14.800" width="85.500" height="149.300"/></clipPath></defs>
<rect x="2.400" y="14.800" width="85.500" height="149.300" fill="url(#spg)"/>
<g clip-path="url(#spc)"><g filter="url(#sbl)">
<rect x="14.500" y="14" width="10.500" height="90" fill="#2a9ad6" opacity=".25"/>
<rect x="15.600" y="14" width="1.700" height="90" fill="#033a72" opacity=".8"/><rect x="21.800" y="14" width="2" height="90" fill="#033a72" opacity=".8"/>
<rect x="64" y="14" width="13" height="26" fill="#0a78b4" opacity=".45"/>
<rect x="2" y="101.500" width="56" height="4" fill="#042f6a" opacity=".6"/>
<path d="M60 66c6-4 16-6 28-2v64l-44 2c4-10 8-24 10-36 1-10 2-20 6-28z" fill="#3d86cc" opacity=".26"/>
<path d="M57 36c2-8 10-13 19-11 8 2 12 8 12 16v34c-6 2-12 0-16-4l-6-2c-3-1-4-4-3-7l-1-5-3-2 2-4c-2-5-3-10-4-15z" fill="#05497e" opacity=".48"/>
<path d="M60 33c3-8 12-12 20-8 5 3 8 8 8 14v10c-4-8-10-12-18-12-4 0-7 1-10 3z" fill="#032f5a" opacity=".42"/>
<path d="M12 121c4-5 10-8 18-8 6 0 10 2 14 5l-2 4c-8-2-20-2-30-1z" fill="#4a8fd0" opacity=".38"/>
<path d="M2 127l86-3v12l-86 4z" fill="#041a5e" opacity=".55"/>
<path d="M2 142l86-6v8l-86 8z" fill="#0a2f86" opacity=".45"/>
<path d="M30 164l58-16v16z" fill="#0b2a86" opacity=".6"/>
</g></g>
<g fill="none" stroke="#fff" stroke-width="1.300"><path d="M39.500 82.800V67h10.400v15.800M49.900 71.500h4.800v11.300M44.700 67v-3.200M37.200 83.600h20.300"/></g>
<g fill="#fff"><rect x="41.500" y="69.600" width="1.500" height="1.500"/><rect x="44" y="69.600" width="1.500" height="1.500"/><rect x="46.500" y="69.600" width="1.500" height="1.500"/><rect x="41.500" y="72.600" width="1.500" height="1.500"/><rect x="44" y="72.600" width="1.500" height="1.500"/><rect x="46.500" y="72.600" width="1.500" height="1.500"/><rect x="41.500" y="75.600" width="1.500" height="1.500"/><rect x="44" y="75.600" width="1.500" height="1.500"/><rect x="46.500" y="75.600" width="1.500" height="1.500"/></g>
<text x="46.700" y="96" text-anchor="middle" font-weight="bold" font-size="13.800" fill="#fff">logo</text>
</svg>
<svg class="nav" width="88" height="12" viewBox="0 0 88 12" fill="none" stroke="#e9e9ea" stroke-width=".8"><rect x="23.600" y="4.300" width="3.600" height="4" rx=".8"/><rect x="42.600" y="4.500" width="3.800" height="3.800" rx="1.200" stroke-dasharray="2.500 1.200"/><path d="M66.400 4.100v4.600l-3.800-2.300z"/></svg></div><div class="cam"></div></div><div class="pho" style="left:710.200px;top:752.200px"><div class="sb" style="top:29.500px;height:19px"></div><div class="sb" style="top:54.300px;height:14.500px"></div><div class="bz"></div><div class="sc"><div class="st"></div><div class="gut"></div><svg class="in" width="87.900" height="176.100" viewBox="0 0 87.900 176.100" font-family="Liberation Sans">
<text x="12.800" y="26.900" font-weight="bold" font-size="4.300" fill="#16162a">Login</text>
<rect x="14.100" y="31.900" width="60.800" height="5.100" fill="#e8f0fd"/><rect x="13.400" y="37.300" width="63" height=".3" fill="#dfe6f3"/>
<rect x="14.100" y="40.800" width="57.900" height="4.900" fill="#e8f0fd"/><rect x="13.400" y="46" width="64" height=".3" fill="#dfe6f3"/>
<rect x="15.200" y="34.200" width="3.500" height=".8" fill="#b3bed3"/><rect x="15.200" y="43" width="5.500" height=".8" fill="#b3bed3"/>
<path d="M73.700 43.800c.6-1.700 2.400-1.700 3 0" fill="none" stroke="#7fb3dd" stroke-width=".7"/>
<rect x="13.300" y="54.200" width="64.400" height="7.200" rx=".8" fill="#fff" stroke="#a6cbe9" stroke-width=".8"/><rect x="43" y="57.500" width="5.500" height=".9" fill="#3a3aa0"/>
<rect x="13.200" y="66" width="24.800" height=".7" fill="#3f3f9c" opacity=".75"/>
</svg>
<svg class="nav" width="88" height="12" viewBox="0 0 88 12" fill="none" stroke="#e9e9ea" stroke-width=".8"><rect x="23.600" y="4.300" width="3.600" height="4" rx=".8"/><rect x="42.600" y="4.500" width="3.800" height="3.800" rx="1.200" stroke-dasharray="2.500 1.200"/><path d="M66.400 4.100v4.600l-3.800-2.300z"/></svg></div><div class="cam"></div></div><div class="pho" style="left:1008.300px;top:752.200px"><div class="sb" style="top:29.500px;height:19px"></div><div class="sb" style="top:54.300px;height:14.500px"></div><div class="bz"></div><div class="sc"><div class="st"></div><div class="gut"></div><svg class="in" width="87.900" height="176.100" viewBox="0 0 87.900 176.100" font-family="Liberation Sans">
<defs><linearGradient id="og2" x1="0" y1="1" x2="1" y2="0"><stop offset="0" stop-color="#ffd08e"/><stop offset=".5" stop-color="#ffe2b8"/><stop offset="1" stop-color="#ffefd8"/></linearGradient>
<linearGradient id="gg2" x1="0" y1="0" x2="1" y2="1"><stop offset="0" stop-color="#e9e9eb"/><stop offset=".5" stop-color="#f1f1f2"/><stop offset="1" stop-color="#f8f8f9"/></linearGradient></defs>
<rect x="28.8" y="19.4" width="32.600" height="4.900" rx=".8" fill="#fff" stroke="#9ed7f7" stroke-width=".7"/><rect x="40.9" y="21.5" width="8" height=".9" fill="#3a3aa0"/>
<rect x="7.3" y="33.0" width="76.100" height="41.600" rx="1" fill="#bcd9f0"/>
<rect x="10.9" y="37.6" width="41" height="1.100" fill="#1c1c4a"/>
<rect x="10.9" y="47.4" width="19" height="1" fill="#8fa9c4"/>
<text x="10.7" y="59.1" font-weight="bold" font-size="10.800" fill="#fff" letter-spacing=".15">100</text>
<g fill="none" stroke="#79bbf0" stroke-width=".8"><circle cx="76.1" cy="60.9" r="4"/><path d="M74.8 55.5h2.600M76.1 58.9v2.400"/></g>
<rect x="7.3" y="78.6" width="76.100" height="41.100" rx="1" fill="url(#og2)"/>
<rect x="10.9" y="82.4" width="27" height="1.100" fill="#1c1c4a"/>
<g fill="#9a8f86"><rect x="10.9" y="93.9" width="7" height="1"/><rect x="10.9" y="98.6" width="7" height="1"/><rect x="10.9" y="103.3" width="7" height="1"/></g>
<g fill="url(#ob)"><rect x="21.2" y="93.8" width="57.900" height="1.300" rx=".6"/><rect x="21.2" y="98.5" width="47.500" height="1.300" rx=".6"/><rect x="21.2" y="103.2" width="28.700" height="1.300" rx=".6"/></g>
<rect x="7.3" y="123.4" width="76.100" height="29.800" rx="1" fill="url(#gg2)"/>
<rect x="10.9" y="127.6" width="37" height="1.100" fill="#1c1c4a"/>
<svg x="7.3" y="123.4" width="76.100" height="29.800" viewBox="7.3 123.4 76.100 29.800" overflow="hidden"><defs><linearGradient id="d2b" gradientUnits="userSpaceOnUse" x1="34.5" y1="148.5" x2="51.4" y2="135.5"><stop offset="0" stop-color="#1c86f0"/><stop offset=".45" stop-color="#3f9bf2"/><stop offset="1" stop-color="#cfe4f8"/></linearGradient><linearGradient id="d2o" gradientUnits="userSpaceOnUse" x1="51.4" y1="135.5" x2="56.2" y2="145.7"><stop offset="0" stop-color="#f5a04c"/><stop offset="1" stop-color="#fbe6d4"/></linearGradient><linearGradient id="d2g" gradientUnits="userSpaceOnUse" x1="56.2" y1="144.7" x2="44.0" y2="155.9"><stop offset="0" stop-color="#16d487"/><stop offset="1" stop-color="#c9f0e1"/></linearGradient><linearGradient id="d2r" gradientUnits="userSpaceOnUse" x1="45.0" y1="155.9" x2="35.3" y2="150.3"><stop offset="0" stop-color="#f03c5a"/><stop offset="1" stop-color="#f9d6db"/></linearGradient></defs><g fill="none" stroke-width="5.6"><path d="M35.83 151.12A11.2 11.2 0 0 1 51.42 135.53" stroke="url(#d2b)"/><path d="M51.42 135.53A11.2 11.2 0 0 1 56.20 144.70" stroke="url(#d2o)"/><path d="M56.20 144.70A11.2 11.2 0 0 1 45.00 155.90" stroke="url(#d2g)"/><path d="M45.00 155.90A11.2 11.2 0 0 1 35.83 151.12" stroke="url(#d2r)"/></g></svg>
<rect x="41.4" y="141.9" width="4" height=".7" fill="#c9c9cc"/>
<text x="45.0" y="146.8" text-anchor="middle" font-size="4" fill="#8a8a8e">123.650</text>
<rect x="68.2" y="137.7" width="1.700" height="1.700" fill="#3f9bf2"/><rect x="68.2" y="141.4" width="1.700" height="1.700" fill="#f0506a"/><rect x="68.2" y="145.3" width="1.700" height="1.700" fill="#f5a85c"/><rect x="68.2" y="149.0" width="1.700" height="1.700" fill="#2bd893"/>
<g fill="#a6a8ad"><rect x="70.9" y="138.1" width="4.600" height=".9"/><rect x="70.9" y="141.8" width="5.600" height=".9"/><rect x="70.9" y="145.7" width="9" height=".9"/><rect x="70.9" y="149.4" width="8" height=".9"/></g>
</svg>
<svg class="nav" width="88" height="12" viewBox="0 0 88 12" fill="none" stroke="#e9e9ea" stroke-width=".8"><rect x="23.600" y="4.300" width="3.600" height="4" rx=".8"/><rect x="42.600" y="4.500" width="3.800" height="3.800" rx="1.200" stroke-dasharray="2.500 1.200"/><path d="M66.400 4.100v4.600l-3.800-2.300z"/></svg></div><div class="cam"></div></div></div></div>
<div id="ft">
<div class="abs" style="left:228.500px;top:.8px;width:188px;height:43.200px;background:#fff;border-bottom:5.500px solid #00a0e4"></div>
<svg class="abs" style="left:0;top:0" width="420" height="44" fill="none" stroke-linejoin="round">
<path d="M13.300 17.600l6-5.700 6 5.700M14.800 16.300v7.400h9V16.300" stroke="#9b9b9e" stroke-width="1.300"/>
<path transform="translate(0 .8)" d="M98.500 12.400h4.700l1.200 1.500h6.100a.8.800 0 0 1 .8.800v7.200a.8.800 0 0 1-.8.800h-12a.8.800 0 0 1-.8-.8v-8.700a.8.800 0 0 1 .8-.8z" stroke="#9b9b9e" stroke-width="1.200"/>
<path transform="translate(0 .8)" d="M241 12.400h4.700l1.200 1.500h6.100a.8.800 0 0 1 .8.800v7.200a.8.800 0 0 1-.8.800h-12a.8.800 0 0 1-.8-.8v-8.700a.8.800 0 0 1 .8-.8z" stroke="#5a5a5e" stroke-width="1.200"/>
<path d="M203 14.600l8.200 8.200M211.200 14.600l-8.200 8.200" stroke="#88888b" stroke-width="2.800"/>
<path d="M393.800 14.600l8.200 8.200M402 14.600l-8.200 8.200" stroke="#4f4f52" stroke-width="2.800"/>
</svg>
<div class="abs" id="f1" style="left:32px;top:10px;font-size:15px;color:#8d8e91;white-space:nowrap">Home</div>
<div class="abs" id="f2" style="left:117px;top:10px;font-size:15px;color:#8d8e91;white-space:nowrap">Restaurant</div>
<div class="abs" id="f3" style="left:260px;top:10px;font-size:15px;color:#4a4a4d;white-space:nowrap">New Application 2</div>
</div>
</body>
</html>
